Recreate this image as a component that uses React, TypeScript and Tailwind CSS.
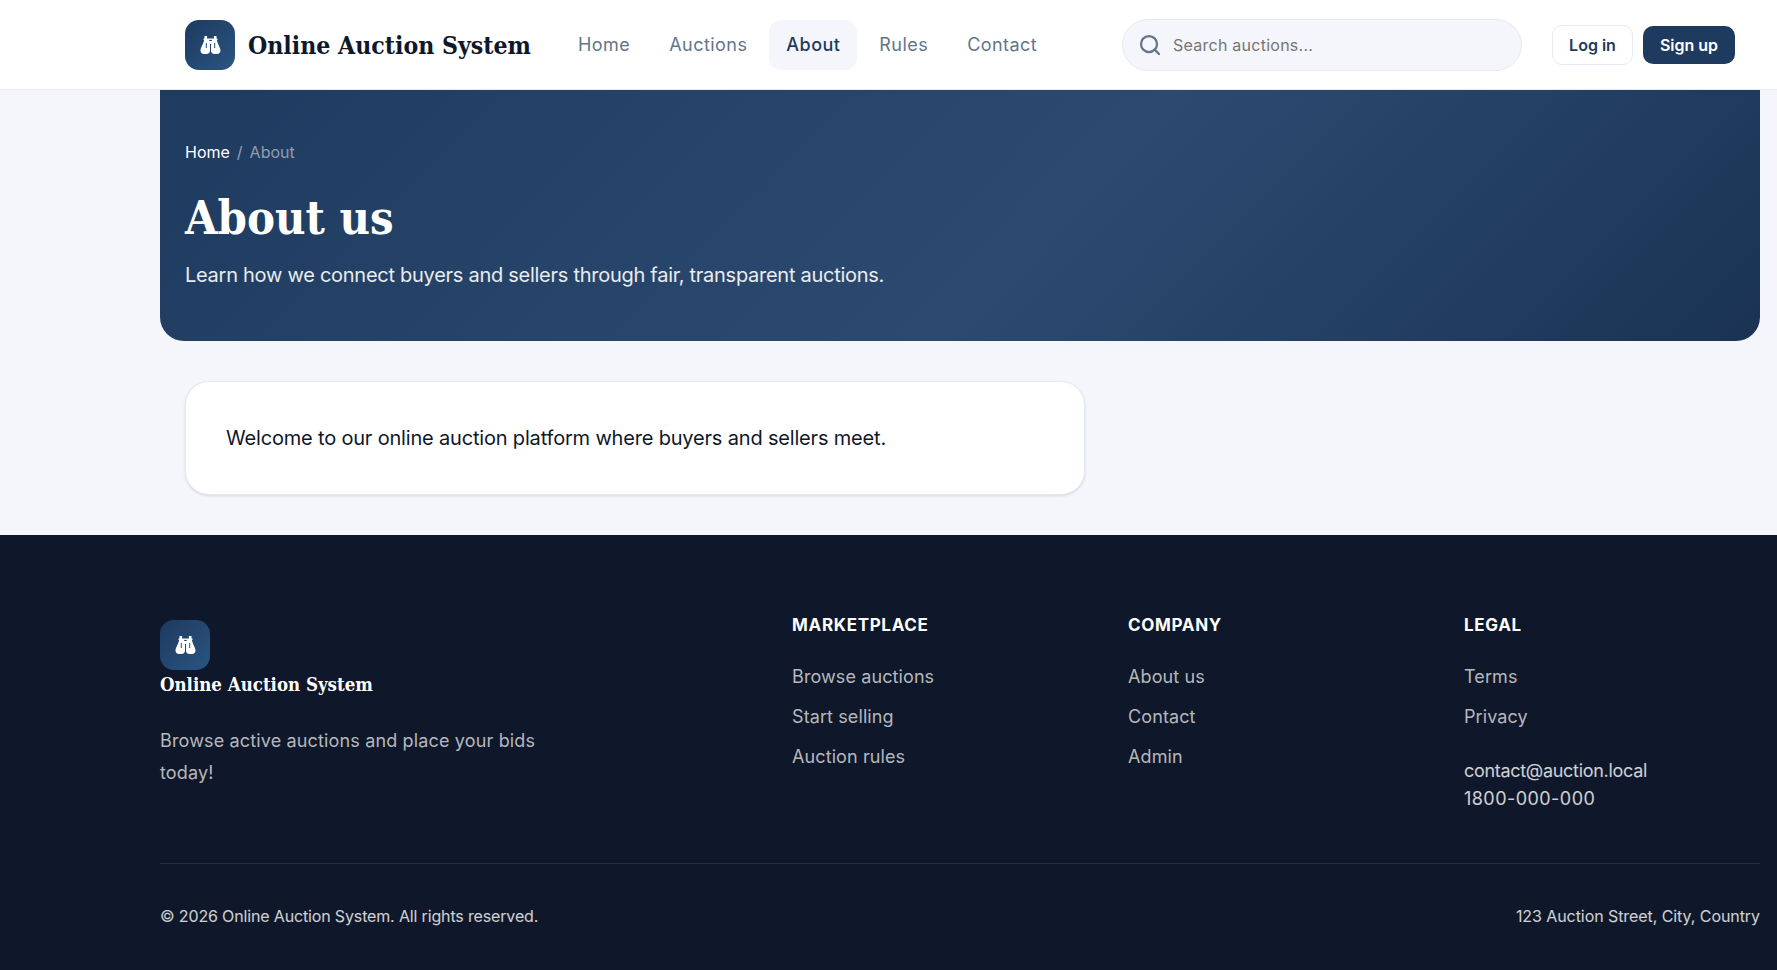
import { Search } from "lucide-react";

const sans = "font-['Inter','Noto_Sans',sans-serif]";
const serif = "font-['DejaVu_Serif_Condensed','Liberation_Serif',serif]";

const navLinks = ["Home", "Auctions", "About", "Rules", "Contact"];

const footerCols = [
  { title: "MARKETPLACE", links: ["Browse auctions", "Start selling", "Auction rules"] },
  { title: "COMPANY", links: ["About us", "Contact", "Admin"] },
];

function LogoMark() {
  return (
    <div className="flex h-[50px] w-[50px] shrink-0 items-center justify-center rounded-[14px] bg-gradient-to-br from-[#1e3a5f] to-[#2a5582]">
      <svg viewBox="0 0 21 18" className="h-[18px] w-[21px]">
        <g className="fill-white">
          <rect x="4.5" y="0" width="2.6" height="3.5" />
          <rect x="13.9" y="0" width="2.6" height="3.5" />
          <rect x="3.500" y="2.500" width="14" height="1.400" />
          <rect x="9" y="5" width="3" height="3" />
          <path d="M4.300 3.500H9L10 9V14.800C10 16.800 8.600 18 6.600 18H4C2 18 .5 16.600 .5 14.600C.5 11.800 3 9 4.300 3.500Z" />
          <path d="M16.700 3.500H12L11 9V14.800C11 16.800 12.400 18 14.400 18H17C19 18 20.500 16.600 20.500 14.600C20.500 11.800 18 9 16.700 3.500Z" />
        </g>
        <rect x="5.800" y="7" width="1" height="5" className="fill-[#27507c]" />
        <rect x="14.200" y="7" width="1" height="5" className="fill-[#27507c]" />
      </svg>
    </div>
  );
}

export default function App() {
  return (
    <div className={`${sans} min-h-[970px] bg-[#f4f6fb] text-[#0f172a]`}>
      {/* header */}
      <header className="h-[90px] border-b border-[#e6eaf2] bg-white">
        <div className="ml-[160px] flex h-[89px] w-[1600px] items-center px-[25px]">
          <LogoMark />
          <span className={`${serif} ml-[13px] w-[283px] whitespace-nowrap pt-[3px] text-[24.6px] font-bold text-[#0f172a]`}>Online Auction System</span>
          <nav className="ml-[30px] flex items-center gap-[5px]">
            {navLinks.map((l) => (
              <a
                key={l}
                className={`rounded-xl px-[17px] py-[14px] text-[18px] leading-[22px] tracking-[0.45px] ${
                  l === "About" ? "bg-[#f4f6fb] font-medium text-[#1e3a5f]" : "text-[#64748b]"
                }`}
              >
                {l}
              </a>
            ))}
          </nav>
          <div className="ml-auto flex h-[52px] w-[400px] items-center gap-[11px] rounded-full border border-[#e6eaf2] bg-[#f4f6fb] px-[15px]">
            <Search className="h-[24px] w-[24px] text-[#64748b]" strokeWidth={2.25} />
            <span className="text-[16px] tracking-[0.25px] text-[#757575]">Search auctions...</span>
          </div>
          <a className="ml-[30px] flex h-[40px] w-[81px] items-center justify-center rounded-[10px] border border-[#e6eaf2] bg-white text-[16px] font-semibold text-[#1e3a5f]">
            Log in
          </a>
          <a className="ml-[10px] flex h-[38px] w-[92px] items-center justify-center rounded-[10px] bg-[#1e3a5f] text-[16px] font-semibold text-white">
            Sign up
          </a>
        </div>
      </header>

      <main className="ml-[160px] w-[1600px]">
        {/* hero */}
        <section className="h-[251px] rounded-b-[24px] bg-[linear-gradient(135deg,#1e3a5f_0%,#2c4a70_55%,#1a3354_100%)] px-[25px] pt-[50px]">
          <div className="flex items-center gap-[7px] text-[16px] leading-6">
            <span className="text-white">Home</span>
            <span className="text-white/50">/</span>
            <span className="text-white/50">About</span>
          </div>
          <h1 className={`${serif} mt-[22px] text-[46.7px] font-bold leading-[64px] text-white`}>About us</h1>
          <p className="mt-[11px] text-[20px] leading-7 tracking-[-0.27px] text-white/90">
            Learn how we connect buyers and sellers through fair, transparent auctions.
          </p>
        </section>

        {/* content */}
        <div className="px-[25px] py-10">
          <div className="flex h-[114px] w-[900px] items-center rounded-[24px] border border-[#e6eaf2] bg-white px-10 shadow-sm">
            <p className="text-[20px] tracking-[-0.18px] text-[#0f172a]">Welcome to our online auction platform where buyers and sellers meet.</p>
          </div>
        </div>
      </main>

      {/* footer */}
      <footer className="h-[435px] bg-[#0f172a]">
        <div className="ml-[160px] w-[1600px] pt-[78px]">
          <div className="grid h-[185px] grid-cols-[632px_336px_336px_1fr]">
            <div className="pt-[7px]">
              <LogoMark />
              <div className={`${serif} mt-[3px] whitespace-nowrap text-[18.5px] font-bold leading-6 text-white`}>Online Auction System</div>
              <p className="mt-[28px] w-[400px] text-[18px] leading-8 tracking-[0.15px] text-white/70">
                Browse active auctions and place your bids today!
              </p>
            </div>
            {footerCols.map((c) => (
              <div key={c.title}>
                <h4 className="text-[17px] font-bold leading-6 tracking-[0.04em] text-white">{c.title}</h4>
                <ul className="mt-[26px] flex flex-col gap-[12px] text-[18px] leading-7 tracking-[0.1px] text-white/70">
                  {c.links.map((l) => (
                    <li key={l}>{l}</li>
                  ))}
                </ul>
              </div>
            ))}
            <div>
              <h4 className="text-[17px] font-bold leading-6 tracking-[0.04em] text-white">LEGAL</h4>
              <ul className="mt-[26px] flex flex-col gap-[12px] text-[18px] leading-7 tracking-[0.1px] text-white/70">
                <li>Terms</li>
                <li>Privacy</li>
              </ul>
              <div className="mt-[26px] text-[18px] leading-7 text-white/80">
                <div className="tracking-[-0.3px]">contact@auction.local</div>
                <div className="tracking-[0.45px]">1800-000-000</div>
              </div>
            </div>
          </div>
          <div className="mt-[65px] flex items-center justify-between border-t border-white/10 pt-[40px] text-[16px] leading-6 text-white/80">
            <span className="tracking-[-0.15px]">© 2026 Online Auction System. All rights reserved.</span>
            <span className="tracking-[-0.07px]">123 Auction Street, City, Country</span>
          </div>
        </div>
      </footer>
    </div>
  );
}
